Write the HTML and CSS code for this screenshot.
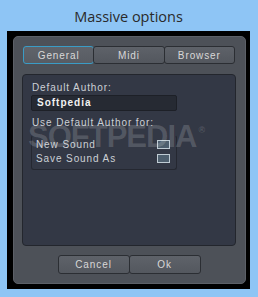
FILE: index.html
```html
<!DOCTYPE html>
<html>
<head>
<meta charset="utf-8">
<link rel="stylesheet" href="styles.css">
</head>
<body>
<div class="window">
  <div class="titlebar">Massive options</div>
  <div class="frame">
    <div class="panel">
      <div class="tabs">
        <div class="tab active">General</div>
        <div class="tab">Midi</div>
        <div class="tab">Browser</div>
      </div>
      <div class="content">
        <div class="label">Default Author:</div>
        <div class="input">Softpedia</div>
        <div class="label label2">Use Default Author for:</div>
        <div class="group">
          <div class="row"><span>New Sound</span><span class="check"></span></div>
          <div class="row"><span>Save Sound As</span><span class="check"></span></div>
        </div>
        <div class="watermark">SOFTPEDIA<span class="reg">®</span></div>
      </div>
      <div class="buttons">
        <div class="btn">Cancel</div>
        <div class="btn">Ok</div>
      </div>
    </div>
  </div>
</div>
</body>
</html>
```
FILE: styles.css
```css
* { box-sizing: border-box; }
html, body { margin: 0; padding: 0; }
body {
  width: 258px;
  height: 297px;
  background: #8ec5f5;
  overflow: hidden;
}
.window {
  width: 258px;
  height: 297px;
  padding: 0 8px 8px 7px;
  display: flex;
  flex-direction: column;
}
.titlebar {
  height: 31px;
  display: flex;
  align-items: center;
  justify-content: center;
  font-family: "Open Sans", "Noto Sans", sans-serif;
  font-size: 14.5px;
  color: #2a2a2a;
  padding-top: 1px;
}
.frame {
  flex: 1;
  background: #000;
  padding: 5px 5px 5px 6px;
  display: flex;
}
.panel {
  flex: 1;
  background: #4d5158;
  border-radius: 5px;
  border: 1px solid #5c6067;
  padding: 9px 9px 9px 8px;
  display: flex;
  flex-direction: column;
}
.tabs {
  display: flex;
  height: 18px;
  margin: 0 0 10px 1px;
  width: 212px;
}
.tab {
  flex: 1;
  display: flex;
  align-items: center;
  justify-content: center;
  background: linear-gradient(#5e6269, #53575e);
  border: 1px solid #2b2e33;
  border-radius: 3px;
  font-family: "Liberation Sans", sans-serif;
  font-size: 10px;
  letter-spacing: 0.9px;
  color: #d8d8d8;
}
.tab + .tab { margin-left: -1px; }
.tab.active {
  border-color: #3a9cc6;
  background: linear-gradient(#60646b, #585c63);
}
.content {
  position: relative;
  height: 172px;
  width: 214px;
  background: #333845;
  border: 1px solid #23262d;
  border-radius: 4px;
  padding: 7px 0 0 8px;
  display: flex;
  flex-direction: column;
  align-items: flex-start;
  font-family: "Liberation Sans", sans-serif;
  font-size: 10px;
  letter-spacing: 0.9px;
  color: #ccd0d5;
}
.label { height: 12px; line-height: 12px; margin-left: 1px; }
.input {
  margin-top: 1px;
  width: 146px;
  height: 16px;
  background: #262a33;
  border: 1px solid #1d2027;
  border-radius: 2px;
  padding-left: 5px;
  line-height: 14px;
  color: #f2f2f2;
  font-weight: bold;
  letter-spacing: 1px;
}
.label2 { margin-top: 6px; }
.group {
  margin-top: 6px;
  width: 146px;
  height: 35px;
  border: 1px solid #252831;
  border-top-color: transparent;
  border-radius: 3px;
  padding: 2px 6px 0 4px;
  display: flex;
  flex-direction: column;
  gap: 2px;
}
.row {
  height: 12px;
  display: flex;
  align-items: center;
  justify-content: space-between;
}
.check {
  width: 13px;
  height: 9px;
  border: 1px solid #bfcbd3;
  background: #4e5f6e;
}
.watermark {
  position: absolute;
  left: 5px;
  top: 44px;
  font-family: "Liberation Sans", sans-serif;
  font-weight: bold;
  font-size: 31px;
  letter-spacing: -1px;
  color: rgba(255, 255, 255, 0.16);
  pointer-events: none;
}
.reg {
  font-size: 9px;
  vertical-align: 14px;
  margin-left: 2px;
}
.buttons {
  margin-top: 9px;
  display: flex;
  justify-content: center;
}
.btn {
  width: 72px;
  height: 19px;
  display: flex;
  align-items: center;
  justify-content: center;
  background: linear-gradient(#5e6269, #54585f);
  border: 1px solid #2b2e33;
  border-radius: 3px;
  font-family: "Liberation Sans", sans-serif;
  font-size: 10px;
  letter-spacing: 0.9px;
  color: #d8d8d8;
}
.btn + .btn { margin-left: -1px; }
```
